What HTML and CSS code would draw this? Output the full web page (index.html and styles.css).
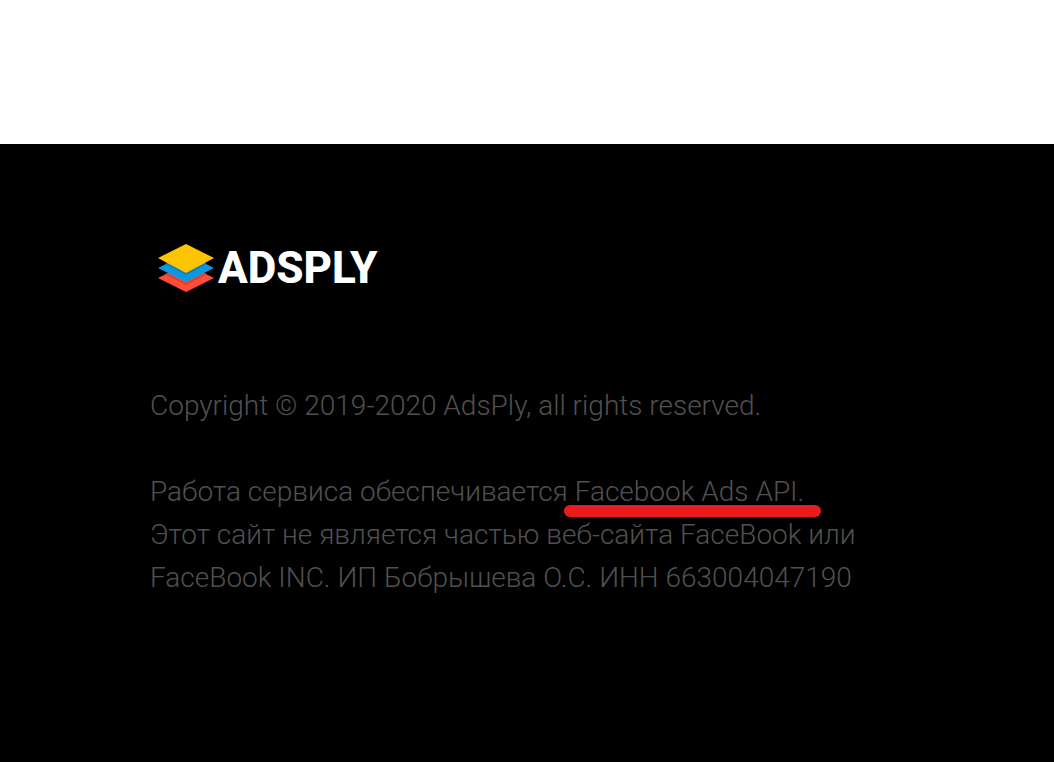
FILE: index.html
```html
<!DOCTYPE html>
<html lang="ru">
<head>
  <meta charset="UTF-8">
  <title>AdsPly</title>
  <link rel="stylesheet" href="styles.css">
</head>
<body>

  <main></main>

  <footer class="footer">
    <div class="logo">
      <svg class="logo-icon" viewBox="0 0 56 48" aria-hidden="true">
        <path fill="#ff4c38" d="M0 34 28 20 56 34 28 48z"/>
        <path fill="#d8402f" d="M9 29 28 39 47 29 49 30 28 41 7 30z"/>
        <path fill="#0b98e0" d="M0 24 28 10 56 24 28 38z"/>
        <path fill="#0a80bd" d="M9 19 28 28 47 19 49 20 28 31 7 20z"/>
        <path fill="#ffc400" d="M0 14 28 0 56 14 28 29z"/>
      </svg>
      <span class="logo-text">ADSPLY</span>
    </div>

    <p class="copyright">Copyright © 2019-2020 AdsPly, all rights reserved.</p>

    <p class="legal">
      Работа сервиса обеспечивается <span class="marked">Facebook Ads API.</span><br>
      Этот сайт не является частью веб-сайта FaceBook или<br>
      FaceBook INC. ИП Бобрышева О.С. ИНН 663004047190
    </p>
  </footer>

</body>
</html>
```
FILE: styles.css
```css
body {
  display: flex;
  flex-direction: column;
  min-height: 100vh;
  margin: 0;
  background-color: #fff;
  font-family: Roboto, "Noto Sans", sans-serif;
}

main {
  min-height: 144px;
}

.footer {
  flex: 1;
  padding: 100px 150px;
  background-color: #000;
  color: #505050;
  font-size: 28px;
  font-weight: 300;
  line-height: 43px;
}

.logo {
  display: flex;
  align-items: center;
  gap: 4px;
  height: 48px;
  padding-left: 8px;
}

.logo-icon {
  width: 56px;
  height: 48px;
}

.logo-text {
  color: #fff;
  font-size: 44px;
  font-weight: 800;
}

.copyright {
  margin: 92px 0 43px;
}

.legal {
  margin: 0;
  white-space: nowrap;
}

.marked {
  position: relative;
}

/* red marker stroke under the API name */
.marked::after {
  content: "";
  position: absolute;
  left: -11px;
  right: -17px;
  bottom: -9px;
  height: 12px;
  border-radius: 6px;
  background-color: #e81c1c;
}
```
